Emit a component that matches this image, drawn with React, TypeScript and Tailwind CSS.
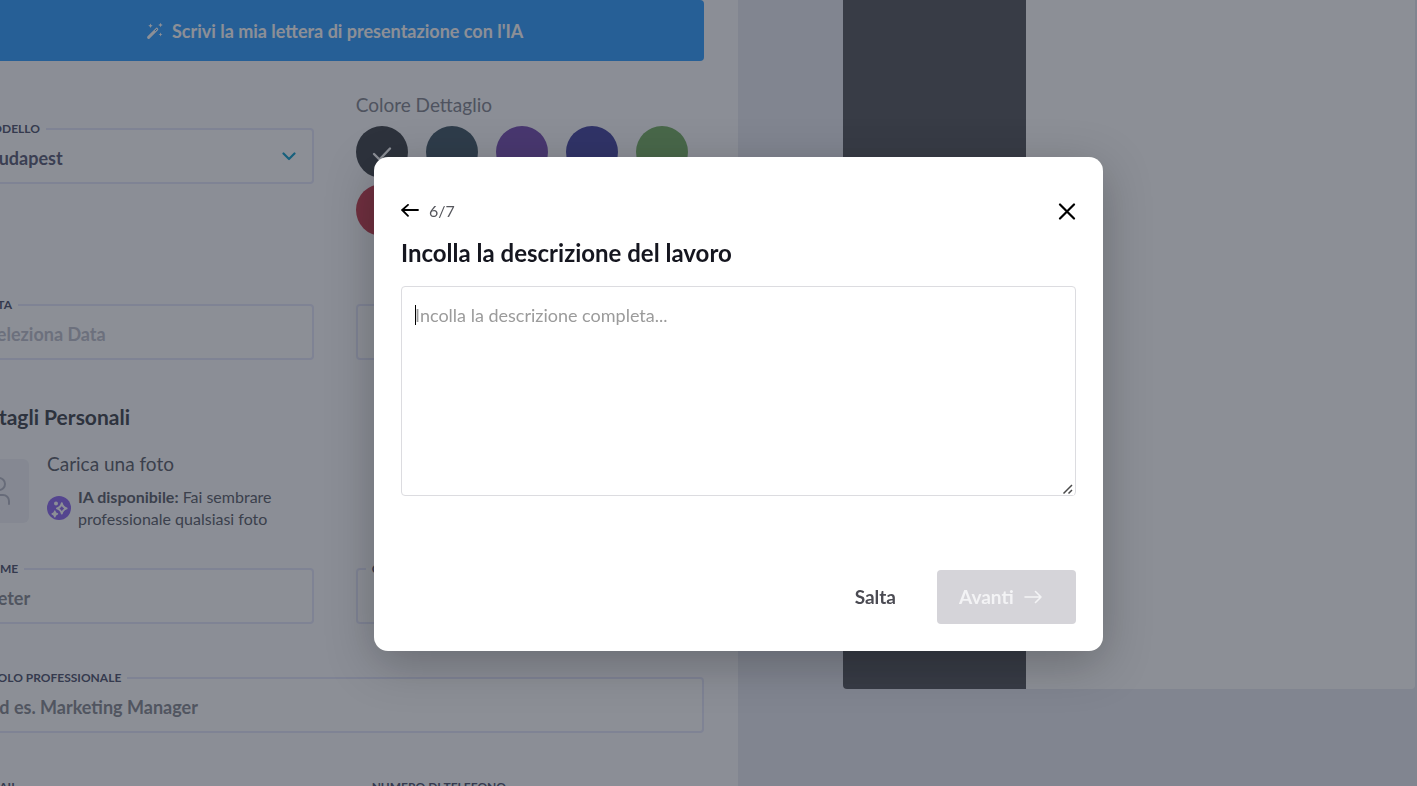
import type { InputHTMLAttributes, ReactNode } from 'react';

const swatches = [
  { name: 'Antracite', className: 'bg-[#42464c]', selected: true },
  { name: 'Ardesia', className: 'bg-[#445a68]' },
  { name: 'Viola', className: 'bg-[#7850b2]' },
  { name: 'Indaco', className: 'bg-[#4848a2]' },
  { name: 'Verde', className: 'bg-[#78b066]' },
  { name: 'Rosso', className: 'bg-[#c64052]' },
];

function WandIcon() {
  return (
    <svg width="18" height="18" viewBox="0 0 18 18" fill="none" aria-hidden>
      <path d="M2.600 15.400 10.800 7.200" stroke="currentColor" strokeWidth="3" strokeLinecap="round" />
      <path d="m9.200 8.800 1.600-1.600" stroke="#329eff" strokeWidth="1" strokeLinecap="round" />
      <path
        d="m4.500 1.500.7 1.500 1.500.7-1.500.7-.7 1.500-.7-1.500-1.500-.7 1.500-.7zM14.500.7l.7 1.600 1.600.7-1.600.7-.7 1.600-.7-1.600-1.600-.7 1.600-.7zM14.500 10.500l.6 1.400 1.400.6-1.400.6-.6 1.400-.6-1.400-1.400-.6 1.400-.6z"
        fill="currentColor"
      />
    </svg>
  );
}

function SparkleBadge() {
  return (
    <svg width="24" height="24" viewBox="0 0 24 24" fill="none" className="shrink-0" aria-hidden>
      <circle cx="12" cy="12" r="12" fill="#8f6af0" />
      <path
        d="M14.800 7.200c.6 2.900 2 4.300 4.800 5.200-2.800.9-4.200 2.300-4.800 5.200-.6-2.900-2-4.300-4.800-5.200 2.800-.9 4.200-2.300 4.800-5.200z"
        stroke="#fff"
        strokeWidth="1.900"
        strokeLinejoin="round"
      />
      <path
        d="M7.800 14.800c.4 1.800 1.200 2.600 2.800 3.100-1.600.5-2.400 1.300-2.800 3.100-.4-1.800-1.200-2.600-2.800-3.100 1.600-.5 2.400-1.300 2.800-3.100z"
        fill="#fff"
        stroke="#fff"
        strokeWidth="1.200"
        strokeLinejoin="round"
      />
      <circle cx="9" cy="7.400" r="2" fill="#fff" />
    </svg>
  );
}

function Frame({ id, label, children }: { id: string; label: string; children: ReactNode }) {
  return (
    <fieldset className="min-w-0 rounded border-2 border-[#e4e6fa] bg-white">
      <legend className="ml-2 px-1.5 text-xs leading-4 font-bold text-[#50556f] uppercase">
        <label htmlFor={id}>{label}</label>
      </legend>
      {children}
    </fieldset>
  );
}

type FieldProps = InputHTMLAttributes<HTMLInputElement> & { id: string; label: string };

function Field({ id, label, className = 'placeholder:text-[#888b92]', ...props }: FieldProps) {
  return (
    <Frame id={id} label={label}>
      <input
        id={id}
        className={`h-[45px] w-full bg-transparent px-5 pb-1 text-lg font-bold text-[#5c5f78] outline-none ${className}`}
        {...props}
      />
    </Frame>
  );
}

function LetterForm() {
  return (
    <form className="-ml-[35px] pr-[34px]">
      <button
        type="button"
        className="flex h-[61px] w-full items-center justify-center gap-2 rounded bg-[#329eff] text-lg font-bold text-white"
      >
        <WandIcon />
        Scrivi la mia lettera di presentazione con l'IA
      </button>

      <div className="mt-8 grid grid-cols-2 gap-x-[42px]">
        <div className="pt-7">
          <Frame id="template" label="Modello">
            <div className="flex items-center pr-4">
              <select
                id="template"
                className="h-[45px] w-full appearance-none bg-transparent px-5 pb-1 text-lg font-bold text-[#5c5f78] outline-none"
              >
                <option>Budapest</option>
              </select>
              <svg width="14" height="9" viewBox="0 0 14 9" fill="none" className="mb-1.5 shrink-0" aria-hidden>
                <path d="m1.500 1.500 5.500 5.500 5.500-5.500" stroke="#14a0cc" strokeWidth="2.200" strokeLinecap="round" strokeLinejoin="round" />
              </svg>
            </div>
          </Frame>
        </div>
        <div>
          <p className="text-[19px] leading-6 text-[#848790]">Colore Dettaglio</p>
          <div className="mt-[9px] flex flex-wrap gap-x-[18px] gap-y-1.5">
            {swatches.map((swatch) => (
              <button
                key={swatch.name}
                type="button"
                aria-label={swatch.name}
                className={`flex size-[52px] items-center justify-center rounded-full ${swatch.className}`}
              >
                {swatch.selected && (
                  <svg width="20" height="16" viewBox="0 0 20 16" fill="none" className="mt-1" aria-hidden>
                    <path d="m2 8 5.500 5.500L18 2.500" stroke="#fff" strokeWidth="2.400" strokeLinecap="round" strokeLinejoin="round" />
                  </svg>
                )}
              </button>
            ))}
          </div>
        </div>
      </div>

      <div className="mt-[61px] grid grid-cols-2 items-end gap-x-[42px]">
        <Field id="date" label="Data" placeholder="Seleziona Data" className="placeholder:text-[#bfc1cc]" />
        <input
          aria-label="Luogo"
          className="h-14 w-full rounded border-2 border-[#e4e6fa] bg-white px-5 text-lg font-bold text-[#5c5f78] outline-none"
        />
      </div>

      <h2 className="mt-[43px] text-[21px] leading-7 font-bold text-[#42464f]">Dettagli Personali</h2>
      <div className="mt-[21px] flex items-center gap-[18px]">
        <div className="flex size-16 shrink-0 items-center justify-center rounded-md bg-[#f0f1f6]">
          <svg width="32" height="32" viewBox="0 0 32 32" fill="none" stroke="#b4b7c4" strokeWidth="2" strokeLinecap="round" aria-hidden>
            <circle cx="18" cy="9" r="6" />
            <path d="M4 29v-3a6 6 0 0 1 6-6h12a6 6 0 0 1 6 6v3" />
          </svg>
        </div>
        <div>
          <p className="text-[19px] leading-6 text-[#5d616b]">Carica una foto</p>
          <div className="mt-2.5 flex items-center gap-[7px]">
            <SparkleBadge />
            <p className="w-[220px] text-base leading-[22px] text-[#5d616b]">
              <strong>IA disponibile:</strong> Fai sembrare professionale qualsiasi foto
            </p>
          </div>
        </div>
      </div>

      <div className="mt-[31px] grid grid-cols-2 gap-x-[42px] gap-y-[46px]">
        <Field id="first-name" label="Nome" placeholder="Peter" />
        <Field id="last-name" label="Cognome" />
        <div className="col-span-2">
          <Field id="job-title" label="Ruolo professionale" placeholder="Ad es. Marketing Manager" />
        </div>
        <Field id="email" label="Email" />
        <Field id="phone" label="Numero di telefono" />
      </div>
    </form>
  );
}

function JobDescriptionDialog() {
  return (
    <div className="fixed inset-0 flex items-start justify-center bg-[#1a202e]/50 pt-[157px] pl-[60px]">
      <div
        role="dialog"
        aria-modal="true"
        aria-labelledby="dialog-title"
        className="w-full max-w-[729px] rounded-[14px] bg-white px-[27px] pt-[42px] pb-[27px] shadow-[0_12px_48px_rgba(0,0,0,0.25)]"
      >
        <div className="flex items-center justify-between">
          <div className="flex items-center gap-2.5">
            <button type="button" aria-label="Indietro">
              <svg width="18" height="14" viewBox="0 0 18 14" fill="none" stroke="#000" strokeWidth="1.800" strokeLinecap="round" strokeLinejoin="round" aria-hidden>
                <path d="M17 6H1M7 .9 1.200 6 7 11.800" />
              </svg>
            </button>
            <span className="text-base text-[#55565c]">6/7</span>
          </div>
          <button type="button" aria-label="Chiudi">
            <svg width="18" height="18" viewBox="0 0 18 18" fill="none" stroke="#000" strokeWidth="2.200" strokeLinecap="round" aria-hidden>
              <path d="m2 2.500 14 14M16 2.500l-14 14" />
            </svg>
          </button>
        </div>

        <h1 id="dialog-title" className="mt-4 text-2xl leading-7 font-bold text-[#15161f]">
          <label htmlFor="job-description">Incolla la descrizione del lavoro</label>
        </h1>
        <div className="relative mt-[19px]">
          <textarea
            id="job-description"
            placeholder="Incolla la descrizione completa..."
            className="block h-[210px] w-full rounded border border-[#dcdce0] px-[13px] py-4 text-lg leading-6 outline-none placeholder:text-[#9b9b9b]"
          />
          <span className="pointer-events-none absolute top-[19px] left-3.5 h-5 w-px bg-black" aria-hidden />
          <svg
            width="12"
            height="12"
            viewBox="0 0 12 12"
            className="pointer-events-none absolute right-0.5 bottom-px bg-white"
            stroke="#4a4a4a"
            strokeWidth="1.500"
            aria-hidden
          >
            <path d="m1.500 10.500 8.500-8.500M6.500 10.500 10 7" />
          </svg>
        </div>

        <div className="mt-[74px] flex items-center justify-end gap-[41px]">
          <button type="button" className="text-[19px] font-bold text-[#4b4b53]">
            Salta
          </button>
          <button
            type="button"
            disabled
            className="flex h-[54px] w-[139px] items-center gap-2.5 rounded bg-[#d5d4d9] px-[22px] text-[19px] font-bold text-[#f3f3f5]"
          >
            Avanti
            <svg width="18" height="14" viewBox="0 0 18 14" fill="none" stroke="currentColor" strokeWidth="1.600" strokeLinecap="round" strokeLinejoin="round" aria-hidden>
              <path d="M1 7h16M11.500 1.500 17 7l-5.500 5.500" />
            </svg>
          </button>
        </div>
      </div>
    </div>
  );
}

export default function App() {
  return (
    <div className="h-screen overflow-hidden font-['Lato',sans-serif]">
      <div className="grid h-full grid-cols-[521fr_479fr]">
        <main className="overflow-hidden bg-[#fcfdff]">
          <LetterForm />
        </main>
        <aside className="bg-[#e8eaf2] pr-0.5 pl-[105px]">
          <div className="flex h-[689px] overflow-hidden rounded-b bg-white">
            <div className="w-[32%] bg-[#56585e]" />
          </div>
        </aside>
      </div>
      <JobDescriptionDialog />
    </div>
  );
}
